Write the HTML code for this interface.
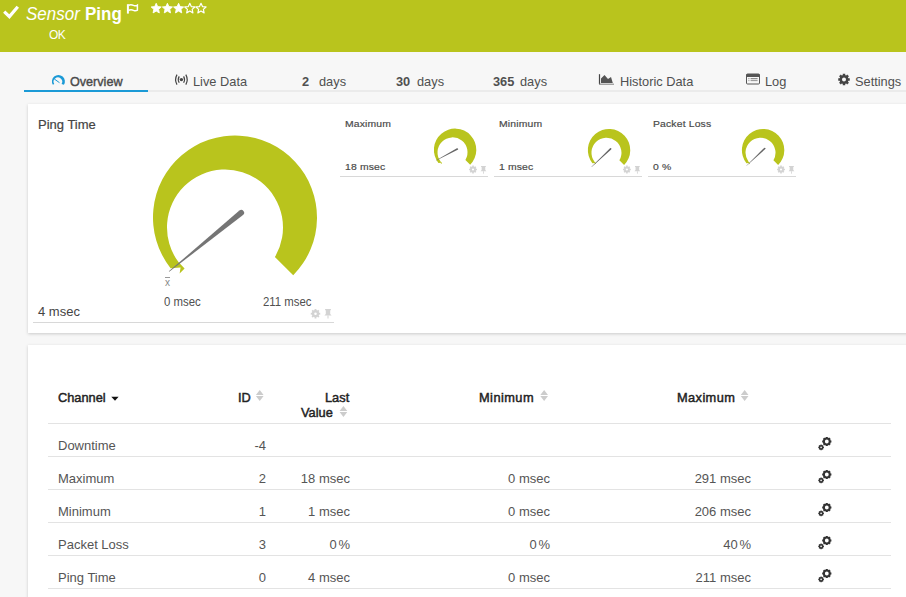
<!DOCTYPE html>
<html><head><meta charset="utf-8">
<style>
*{box-sizing:border-box;margin:0;padding:0}
html,body{width:906px;height:597px;overflow:hidden;background:#f7f7f7;font-family:"Liberation Sans",sans-serif;color:#444}
.abs{position:absolute;white-space:nowrap}
#hdr{position:absolute;left:0;top:0;width:906px;height:52px;background:#b9c41d}
.t{color:#fff}
.tabline{position:absolute;left:24px;top:90px;width:882px;height:2px;background:#ebebeb}
.tabul{position:absolute;left:24px;top:90px;width:124px;height:2px;background:#1b9ad6}
.tab{position:absolute;top:74px;font-size:12.8px;color:#505050;white-space:nowrap}
.panel{position:absolute;left:28px;background:#fff;box-shadow:0 1px 3px rgba(0,0,0,0.18)}
.th{position:absolute;font-size:12.8px;color:#222;-webkit-text-stroke:0.45px #222;white-space:nowrap}
.td{position:absolute;font-size:13px;color:#555;white-space:nowrap}
.rb{position:absolute;left:48px;width:843px;height:1px;background:#e3e3e3}
.sm{font-size:10.4px;color:#4a4a4a;-webkit-text-stroke:0.2px #4a4a4a;letter-spacing:0.15px;transform:scaleY(0.9);transform-origin:0 9px}
.ul{position:absolute;height:1px;background:#d8d8d8}
</style></head><body>
<div id="hdr"></div>
<svg class="abs" style="left:0;top:0" width="906" height="51" viewBox="0 0 906 51">
<path d="M4.2 11.6 L9.4 16.6 L17.8 6.8" fill="none" stroke="#fff" stroke-width="3.2"/>
<path d="M127.9 4.2 V13.6" stroke="#fff" stroke-width="2"/><path d="M128.5 5.2 Q131 4 133.5 5.4 Q135.8 6.4 137.4 5.2 V10.2 Q135.8 11.4 133.5 10.4 Q131 9 128.5 10.4" fill="none" stroke="#fff" stroke-width="1.5"/>
<path d="M156.20,3.30 L157.67,6.58 L161.24,6.96 L158.58,9.37 L159.32,12.89 L156.20,11.10 L153.08,12.89 L153.82,9.37 L151.16,6.96 L154.73,6.58Z" fill="#fff" stroke="#fff" stroke-width="0.9" stroke-linejoin="round"/><path d="M167.40,3.30 L168.87,6.58 L172.44,6.96 L169.78,9.37 L170.52,12.89 L167.40,11.10 L164.28,12.89 L165.02,9.37 L162.36,6.96 L165.93,6.58Z" fill="#fff" stroke="#fff" stroke-width="0.9" stroke-linejoin="round"/><path d="M178.60,3.30 L180.07,6.58 L183.64,6.96 L180.98,9.37 L181.72,12.89 L178.60,11.10 L175.48,12.89 L176.22,9.37 L173.56,6.96 L177.13,6.58Z" fill="#fff" stroke="#fff" stroke-width="0.9" stroke-linejoin="round"/><path d="M189.80,3.30 L191.27,6.58 L194.84,6.96 L192.18,9.37 L192.92,12.89 L189.80,11.10 L186.68,12.89 L187.42,9.37 L184.76,6.96 L188.33,6.58Z" fill="none" stroke="#fff" stroke-width="1.2" stroke-linejoin="round"/><path d="M201.00,3.30 L202.47,6.58 L206.04,6.96 L203.38,9.37 L204.12,12.89 L201.00,11.10 L197.88,12.89 L198.62,9.37 L195.96,6.96 L199.53,6.58Z" fill="none" stroke="#fff" stroke-width="1.2" stroke-linejoin="round"/>
</svg>
<div class="abs t" style="left:26px;top:5px;font-size:17px;font-style:italic;transform:scaleY(1.12);transform-origin:0 16px">Sensor</div>
<div class="abs t" style="left:85px;top:5px;font-size:17px;font-weight:700;transform:scaleY(1.12);transform-origin:0 16px">Ping</div>
<div class="abs t" style="left:49px;top:28px;font-size:12px;letter-spacing:-0.6px;transform:scaleY(1.1);transform-origin:0 11px">OK</div>

<div class="tabline"></div>
<div class="tabul"></div>
<svg class="abs" style="left:0;top:60px" width="906" height="30" viewBox="0 60 906 30">
<path d="M52.89,84.84 A6.5 6.5 0 1 1 63.91,84.84 L61.55,83.98 A4.3 4.3 0 1 0 54.25,83.98 Z" fill="#1b9ad6"/>
<path d="M54.3 79 L59.5 82.7" stroke="#1b9ad6" stroke-width="1"/>
<circle cx="181.4" cy="79.6" r="1.7" fill="#444"/>
<path d="M179.2 76.4 Q177.3 79.6 179.2 82.8 M183.6 76.4 Q185.5 79.6 183.6 82.8" fill="none" stroke="#444" stroke-width="1.2"/>
<path d="M177 74.6 Q174.2 79.6 177 84.6 M185.8 74.6 Q188.6 79.6 185.8 84.6" fill="none" stroke="#444" stroke-width="1.2"/>
<path d="M599.5 74.2 V84.2" fill="none" stroke="#444" stroke-width="1.2"/><path d="M599 84.2 H614" stroke="#888" stroke-width="1.1"/>
<path d="M601 83 V78.5 L604.5 75 L608 79 L611 77 L612.8 83 Z" fill="#555"/>
<rect x="746.5" y="74" width="13" height="10" rx="1" fill="none" stroke="#555" stroke-width="1"/>
<rect x="746.5" y="74" width="13" height="3" fill="#555"/>
<path d="M748.4 78.7 H749.4 M750.6 78.7 H757.6" stroke="#666" stroke-width="0.9"/><path d="M748.4 80.6 H749.4 M750.6 80.6 H757.6" stroke="#888" stroke-width="0.9"/>
<path fill-rule="evenodd" fill="#444" d="M842.80,75.16 L842.74,73.74 L845.26,73.74 L845.20,75.16 L845.72,75.34 L846.22,75.58 L847.18,74.53 L848.97,76.32 L847.92,77.28 L848.16,77.78 L848.34,78.30 L849.76,78.24 L849.76,80.76 L848.34,80.70 L848.16,81.22 L847.92,81.72 L848.97,82.68 L847.18,84.47 L846.22,83.42 L845.72,83.66 L845.20,83.84 L845.26,85.26 L842.74,85.26 L842.80,83.84 L842.28,83.66 L841.78,83.42 L840.82,84.47 L839.03,82.68 L840.08,81.72 L839.84,81.22 L839.66,80.70 L838.24,80.76 L838.24,78.24 L839.66,78.30 L839.84,77.78 L840.08,77.28 L839.03,76.32 L840.82,74.53 L841.78,75.58 L842.28,75.34Z M846.00,79.50 A2.00 2.00 0 1 0 842.00,79.50 A2.00 2.00 0 1 0 846.00,79.50Z"/>
</svg>
<div class="tab" style="left:70px;font-size:12.6px;top:75px;color:#4a4a4a;-webkit-text-stroke:0.4px #4a4a4a">Overview</div>
<div class="tab" style="left:193px">Live Data</div>
<div class="tab" style="left:302px"><b>2</b></div>
<div class="tab" style="left:319px">days</div>
<div class="tab" style="left:396px"><b>30</b></div>
<div class="tab" style="left:417px">days</div>
<div class="tab" style="left:493px"><b>365</b></div>
<div class="tab" style="left:520px">days</div>
<div class="tab" style="left:620px">Historic Data</div>
<div class="tab" style="left:765px">Log</div>
<div class="tab" style="left:855px">Settings</div>

<div class="panel" style="top:104px;width:890px;height:229px"></div>
<div class="panel" style="top:345px;width:890px;height:260px"></div>

<div class="abs" style="left:38px;top:117px;font-size:13px;color:#444;-webkit-text-stroke:0.2px #444">Ping Time</div>
<div class="abs" style="left:38px;top:304px;font-size:13px;color:#444">4 msec</div>
<div class="ul" style="left:33px;top:322px;width:301px"></div>

<svg class="abs" style="left:0;top:0" width="906" height="597" viewBox="0 0 906 597">
<path fill="#b9c41d" d="M170.57,268.23 A82.00 82.00 0 1 1 293.23,275.23 L274.90,257.06 A58.00 58.00 0 1 0 178.64,262.35 L184.60,268.60 L179.60,273.40 L180.60,267.60 Z"/>
<path fill="#757575" d="M169.19,271.83 L243.03,215.05 A2.9 2.9 0 0 0 239.37,210.55 L168.81,271.37 Z"/>
<path fill="#b9c41d" d="M438.44,162.91 A21.20 21.20 0 1 1 470.16,164.73 L465.42,160.03 A15.00 15.00 0 1 0 440.53,161.39 L442.07,163.01 L440.78,164.25 L441.04,162.75 Z"/>
<path fill="#b9c41d" d="M592.39,163.21 A21.20 21.20 0 1 1 624.11,165.03 L619.37,160.33 A15.00 15.00 0 1 0 594.48,161.69 L596.02,163.31 L594.73,164.55 L594.99,163.05 Z"/>
<path fill="#b9c41d" d="M746.44,163.21 A21.20 21.20 0 1 1 778.16,165.03 L773.42,160.33 A15.00 15.00 0 1 0 748.53,161.69 L750.07,163.31 L748.78,164.55 L749.04,163.05 Z"/>
<path fill="#666" d="M436.27,160.43 L457.70,149.85 A0.85 0.85 0 0 0 456.90,148.35 L436.13,160.17 Z"/>
<path fill="#666" d="M591.70,166.91 L611.18,149.52 A0.85 0.85 0 0 0 610.02,148.28 L591.50,166.69 Z"/>
<path fill="#666" d="M746.30,166.11 L765.28,149.12 A0.85 0.85 0 0 0 764.12,147.88 L746.10,165.89 Z"/>
<path fill-rule="evenodd" fill="#d3d3d3" d="M314.60,310.11 L314.56,308.99 L316.44,308.99 L316.40,310.11 L316.92,310.28 L317.40,310.53 L318.17,309.71 L319.49,311.03 L318.67,311.80 L318.92,312.28 L319.09,312.80 L320.21,312.76 L320.21,314.64 L319.09,314.60 L318.92,315.12 L318.67,315.60 L319.49,316.37 L318.17,317.69 L317.40,316.87 L316.92,317.12 L316.40,317.29 L316.44,318.41 L314.56,318.41 L314.60,317.29 L314.08,317.12 L313.60,316.87 L312.83,317.69 L311.51,316.37 L312.33,315.60 L312.08,315.12 L311.91,314.60 L310.79,314.64 L310.79,312.76 L311.91,312.80 L312.08,312.28 L312.33,311.80 L311.51,311.03 L312.83,309.71 L313.60,310.53 L314.08,310.28Z M316.80,313.70 A1.30 1.30 0 1 0 314.20,313.70 A1.30 1.30 0 1 0 316.80,313.70Z"/>
<path d="M325.10,309.00 L330.90,309.00 L330.90,310.20 L330.20,310.20 L330.20,314.00 L331.60,315.50 L324.40,315.50 L325.80,314.00 L325.80,310.20 L325.10,310.20 Z" fill="#d3d3d3"/><rect x="327.50" y="315.50" width="1.00" height="3.00" fill="#d3d3d3"/>
<path fill-rule="evenodd" fill="#d3d3d3" d="M472.25,166.49 L472.22,165.58 L473.78,165.58 L473.75,166.49 L474.19,166.64 L474.59,166.84 L475.22,166.17 L476.33,167.28 L475.66,167.91 L475.86,168.31 L476.01,168.75 L476.92,168.72 L476.92,170.28 L476.01,170.25 L475.86,170.69 L475.66,171.09 L476.33,171.72 L475.22,172.83 L474.59,172.16 L474.19,172.36 L473.75,172.51 L473.78,173.42 L472.22,173.42 L472.25,172.51 L471.81,172.36 L471.41,172.16 L470.78,172.83 L469.67,171.72 L470.34,171.09 L470.14,170.69 L469.99,170.25 L469.08,170.28 L469.08,168.72 L469.99,168.75 L470.14,168.31 L470.34,167.91 L469.67,167.28 L470.78,166.17 L471.41,166.84 L471.81,166.64Z M474.10,169.50 A1.10 1.10 0 1 0 471.90,169.50 A1.10 1.10 0 1 0 474.10,169.50Z"/><path d="M481.07,165.90 L485.83,165.90 L485.83,166.88 L485.26,166.88 L485.26,170.00 L486.40,171.23 L480.50,171.23 L481.65,170.00 L481.65,166.88 L481.07,166.88 Z" fill="#d3d3d3"/><rect x="483.04" y="171.23" width="0.82" height="2.46" fill="#d3d3d3"/><path fill-rule="evenodd" fill="#d3d3d3" d="M626.15,166.49 L626.12,165.58 L627.68,165.58 L627.65,166.49 L628.09,166.64 L628.49,166.84 L629.12,166.17 L630.23,167.28 L629.56,167.91 L629.76,168.31 L629.91,168.75 L630.82,168.72 L630.82,170.28 L629.91,170.25 L629.76,170.69 L629.56,171.09 L630.23,171.72 L629.12,172.83 L628.49,172.16 L628.09,172.36 L627.65,172.51 L627.68,173.42 L626.12,173.42 L626.15,172.51 L625.71,172.36 L625.31,172.16 L624.68,172.83 L623.57,171.72 L624.24,171.09 L624.04,170.69 L623.89,170.25 L622.98,170.28 L622.98,168.72 L623.89,168.75 L624.04,168.31 L624.24,167.91 L623.57,167.28 L624.68,166.17 L625.31,166.84 L625.71,166.64Z M628.00,169.50 A1.10 1.10 0 1 0 625.80,169.50 A1.10 1.10 0 1 0 628.00,169.50Z"/><path d="M634.97,165.90 L639.73,165.90 L639.73,166.88 L639.16,166.88 L639.16,170.00 L640.30,171.23 L634.40,171.23 L635.55,170.00 L635.55,166.88 L634.97,166.88 Z" fill="#d3d3d3"/><rect x="636.94" y="171.23" width="0.82" height="2.46" fill="#d3d3d3"/><path fill-rule="evenodd" fill="#d3d3d3" d="M780.25,166.49 L780.22,165.58 L781.78,165.58 L781.75,166.49 L782.19,166.64 L782.59,166.84 L783.22,166.17 L784.33,167.28 L783.66,167.91 L783.86,168.31 L784.01,168.75 L784.92,168.72 L784.92,170.28 L784.01,170.25 L783.86,170.69 L783.66,171.09 L784.33,171.72 L783.22,172.83 L782.59,172.16 L782.19,172.36 L781.75,172.51 L781.78,173.42 L780.22,173.42 L780.25,172.51 L779.81,172.36 L779.41,172.16 L778.78,172.83 L777.67,171.72 L778.34,171.09 L778.14,170.69 L777.99,170.25 L777.08,170.28 L777.08,168.72 L777.99,168.75 L778.14,168.31 L778.34,167.91 L777.67,167.28 L778.78,166.17 L779.41,166.84 L779.81,166.64Z M782.10,169.50 A1.10 1.10 0 1 0 779.90,169.50 A1.10 1.10 0 1 0 782.10,169.50Z"/><path d="M789.07,165.90 L793.83,165.90 L793.83,166.88 L793.26,166.88 L793.26,170.00 L794.40,171.23 L788.50,171.23 L789.65,170.00 L789.65,166.88 L789.07,166.88 Z" fill="#d3d3d3"/><rect x="791.04" y="171.23" width="0.82" height="2.46" fill="#d3d3d3"/>
<path d="M111.3 396.7 H118.6 L115 400.7 Z" fill="#111"/>
<path d="M255.9 394.9 L259.75 390 L263.6 394.9 Z M255.9 396 L259.75 400.9 L263.6 396 Z" fill="#ccc"/>
<path d="M540.3 394.9 L544.15 390 L548.0 394.9 Z M540.3 396 L544.15 400.9 L548.0 396 Z" fill="#ccc"/>
<path d="M740.8 394.9 L744.65 390 L748.5 394.9 Z M740.8 396 L744.65 400.9 L748.5 396 Z" fill="#ccc"/>
<path d="M339.6 410.9 L343.45000000000005 406 L347.3 410.9 Z M339.6 412 L343.45000000000005 416.9 L347.3 412 Z" fill="#ccc"/>
<path fill-rule="evenodd" fill="#333" d="M825.83,437.62 L825.88,436.89 L827.72,436.89 L827.77,437.62 L828.33,437.80 L828.86,438.07 L829.41,437.59 L830.71,438.89 L830.23,439.44 L830.50,439.97 L830.68,440.53 L831.41,440.58 L831.41,442.42 L830.68,442.47 L830.50,443.03 L830.23,443.56 L830.71,444.11 L829.41,445.41 L828.86,444.93 L828.33,445.20 L827.77,445.38 L827.72,446.11 L825.88,446.11 L825.83,445.38 L825.27,445.20 L824.74,444.93 L824.19,445.41 L822.89,444.11 L823.37,443.56 L823.10,443.03 L822.92,442.47 L822.19,442.42 L822.19,440.58 L822.92,440.53 L823.10,439.97 L823.37,439.44 L822.89,438.89 L824.19,437.59 L824.74,438.07 L825.27,437.80Z M828.70,441.50 A1.90 1.90 0 1 0 824.90,441.50 A1.90 1.90 0 1 0 828.70,441.50Z"/><path fill-rule="evenodd" fill="#333" d="M820.50,445.02 L820.53,444.56 L821.67,444.56 L821.70,445.02 L822.04,445.14 L822.36,445.30 L822.71,444.99 L823.51,445.79 L823.20,446.14 L823.36,446.46 L823.48,446.80 L823.94,446.83 L823.94,447.97 L823.48,448.00 L823.36,448.34 L823.20,448.66 L823.51,449.01 L822.71,449.81 L822.36,449.50 L822.04,449.66 L821.70,449.78 L821.67,450.24 L820.53,450.24 L820.50,449.78 L820.16,449.66 L819.84,449.50 L819.49,449.81 L818.69,449.01 L819.00,448.66 L818.84,448.34 L818.72,448.00 L818.26,447.97 L818.26,446.83 L818.72,446.80 L818.84,446.46 L819.00,446.14 L818.69,445.79 L819.49,444.99 L819.84,445.30 L820.16,445.14Z M821.90,447.40 A0.80 0.80 0 1 0 820.30,447.40 A0.80 0.80 0 1 0 821.90,447.40Z"/>
<path fill-rule="evenodd" fill="#333" d="M825.83,470.62 L825.88,469.89 L827.72,469.89 L827.77,470.62 L828.33,470.80 L828.86,471.07 L829.41,470.59 L830.71,471.89 L830.23,472.44 L830.50,472.97 L830.68,473.53 L831.41,473.58 L831.41,475.42 L830.68,475.47 L830.50,476.03 L830.23,476.56 L830.71,477.11 L829.41,478.41 L828.86,477.93 L828.33,478.20 L827.77,478.38 L827.72,479.11 L825.88,479.11 L825.83,478.38 L825.27,478.20 L824.74,477.93 L824.19,478.41 L822.89,477.11 L823.37,476.56 L823.10,476.03 L822.92,475.47 L822.19,475.42 L822.19,473.58 L822.92,473.53 L823.10,472.97 L823.37,472.44 L822.89,471.89 L824.19,470.59 L824.74,471.07 L825.27,470.80Z M828.70,474.50 A1.90 1.90 0 1 0 824.90,474.50 A1.90 1.90 0 1 0 828.70,474.50Z"/><path fill-rule="evenodd" fill="#333" d="M820.50,478.02 L820.53,477.56 L821.67,477.56 L821.70,478.02 L822.04,478.14 L822.36,478.30 L822.71,477.99 L823.51,478.79 L823.20,479.14 L823.36,479.46 L823.48,479.80 L823.94,479.83 L823.94,480.97 L823.48,481.00 L823.36,481.34 L823.20,481.66 L823.51,482.01 L822.71,482.81 L822.36,482.50 L822.04,482.66 L821.70,482.78 L821.67,483.24 L820.53,483.24 L820.50,482.78 L820.16,482.66 L819.84,482.50 L819.49,482.81 L818.69,482.01 L819.00,481.66 L818.84,481.34 L818.72,481.00 L818.26,480.97 L818.26,479.83 L818.72,479.80 L818.84,479.46 L819.00,479.14 L818.69,478.79 L819.49,477.99 L819.84,478.30 L820.16,478.14Z M821.90,480.40 A0.80 0.80 0 1 0 820.30,480.40 A0.80 0.80 0 1 0 821.90,480.40Z"/>
<path fill-rule="evenodd" fill="#333" d="M825.83,503.62 L825.88,502.89 L827.72,502.89 L827.77,503.62 L828.33,503.80 L828.86,504.07 L829.41,503.59 L830.71,504.89 L830.23,505.44 L830.50,505.97 L830.68,506.53 L831.41,506.58 L831.41,508.42 L830.68,508.47 L830.50,509.03 L830.23,509.56 L830.71,510.11 L829.41,511.41 L828.86,510.93 L828.33,511.20 L827.77,511.38 L827.72,512.11 L825.88,512.11 L825.83,511.38 L825.27,511.20 L824.74,510.93 L824.19,511.41 L822.89,510.11 L823.37,509.56 L823.10,509.03 L822.92,508.47 L822.19,508.42 L822.19,506.58 L822.92,506.53 L823.10,505.97 L823.37,505.44 L822.89,504.89 L824.19,503.59 L824.74,504.07 L825.27,503.80Z M828.70,507.50 A1.90 1.90 0 1 0 824.90,507.50 A1.90 1.90 0 1 0 828.70,507.50Z"/><path fill-rule="evenodd" fill="#333" d="M820.50,511.02 L820.53,510.56 L821.67,510.56 L821.70,511.02 L822.04,511.14 L822.36,511.30 L822.71,510.99 L823.51,511.79 L823.20,512.14 L823.36,512.46 L823.48,512.80 L823.94,512.83 L823.94,513.97 L823.48,514.00 L823.36,514.34 L823.20,514.66 L823.51,515.01 L822.71,515.81 L822.36,515.50 L822.04,515.66 L821.70,515.78 L821.67,516.24 L820.53,516.24 L820.50,515.78 L820.16,515.66 L819.84,515.50 L819.49,515.81 L818.69,515.01 L819.00,514.66 L818.84,514.34 L818.72,514.00 L818.26,513.97 L818.26,512.83 L818.72,512.80 L818.84,512.46 L819.00,512.14 L818.69,511.79 L819.49,510.99 L819.84,511.30 L820.16,511.14Z M821.90,513.40 A0.80 0.80 0 1 0 820.30,513.40 A0.80 0.80 0 1 0 821.90,513.40Z"/>
<path fill-rule="evenodd" fill="#333" d="M825.83,536.62 L825.88,535.89 L827.72,535.89 L827.77,536.62 L828.33,536.80 L828.86,537.07 L829.41,536.59 L830.71,537.89 L830.23,538.44 L830.50,538.97 L830.68,539.53 L831.41,539.58 L831.41,541.42 L830.68,541.47 L830.50,542.03 L830.23,542.56 L830.71,543.11 L829.41,544.41 L828.86,543.93 L828.33,544.20 L827.77,544.38 L827.72,545.11 L825.88,545.11 L825.83,544.38 L825.27,544.20 L824.74,543.93 L824.19,544.41 L822.89,543.11 L823.37,542.56 L823.10,542.03 L822.92,541.47 L822.19,541.42 L822.19,539.58 L822.92,539.53 L823.10,538.97 L823.37,538.44 L822.89,537.89 L824.19,536.59 L824.74,537.07 L825.27,536.80Z M828.70,540.50 A1.90 1.90 0 1 0 824.90,540.50 A1.90 1.90 0 1 0 828.70,540.50Z"/><path fill-rule="evenodd" fill="#333" d="M820.50,544.02 L820.53,543.56 L821.67,543.56 L821.70,544.02 L822.04,544.14 L822.36,544.30 L822.71,543.99 L823.51,544.79 L823.20,545.14 L823.36,545.46 L823.48,545.80 L823.94,545.83 L823.94,546.97 L823.48,547.00 L823.36,547.34 L823.20,547.66 L823.51,548.01 L822.71,548.81 L822.36,548.50 L822.04,548.66 L821.70,548.78 L821.67,549.24 L820.53,549.24 L820.50,548.78 L820.16,548.66 L819.84,548.50 L819.49,548.81 L818.69,548.01 L819.00,547.66 L818.84,547.34 L818.72,547.00 L818.26,546.97 L818.26,545.83 L818.72,545.80 L818.84,545.46 L819.00,545.14 L818.69,544.79 L819.49,543.99 L819.84,544.30 L820.16,544.14Z M821.90,546.40 A0.80 0.80 0 1 0 820.30,546.40 A0.80 0.80 0 1 0 821.90,546.40Z"/>
<path fill-rule="evenodd" fill="#333" d="M825.83,569.62 L825.88,568.89 L827.72,568.89 L827.77,569.62 L828.33,569.80 L828.86,570.07 L829.41,569.59 L830.71,570.89 L830.23,571.44 L830.50,571.97 L830.68,572.53 L831.41,572.58 L831.41,574.42 L830.68,574.47 L830.50,575.03 L830.23,575.56 L830.71,576.11 L829.41,577.41 L828.86,576.93 L828.33,577.20 L827.77,577.38 L827.72,578.11 L825.88,578.11 L825.83,577.38 L825.27,577.20 L824.74,576.93 L824.19,577.41 L822.89,576.11 L823.37,575.56 L823.10,575.03 L822.92,574.47 L822.19,574.42 L822.19,572.58 L822.92,572.53 L823.10,571.97 L823.37,571.44 L822.89,570.89 L824.19,569.59 L824.74,570.07 L825.27,569.80Z M828.70,573.50 A1.90 1.90 0 1 0 824.90,573.50 A1.90 1.90 0 1 0 828.70,573.50Z"/><path fill-rule="evenodd" fill="#333" d="M820.50,577.02 L820.53,576.56 L821.67,576.56 L821.70,577.02 L822.04,577.14 L822.36,577.30 L822.71,576.99 L823.51,577.79 L823.20,578.14 L823.36,578.46 L823.48,578.80 L823.94,578.83 L823.94,579.97 L823.48,580.00 L823.36,580.34 L823.20,580.66 L823.51,581.01 L822.71,581.81 L822.36,581.50 L822.04,581.66 L821.70,581.78 L821.67,582.24 L820.53,582.24 L820.50,581.78 L820.16,581.66 L819.84,581.50 L819.49,581.81 L818.69,581.01 L819.00,580.66 L818.84,580.34 L818.72,580.00 L818.26,579.97 L818.26,578.83 L818.72,578.80 L818.84,578.46 L819.00,578.14 L818.69,577.79 L819.49,576.99 L819.84,577.30 L820.16,577.14Z M821.90,579.40 A0.80 0.80 0 1 0 820.30,579.40 A0.80 0.80 0 1 0 821.90,579.40Z"/>
</svg>
<div class="abs" style="left:165px;top:276.5px;font-size:10px;color:#888">x</div><div class="abs" style="left:164.7px;top:277px;width:5px;height:1px;background:#999"></div>
<div class="abs" style="left:164px;top:296px;font-size:11.4px;color:#505050;transform:scaleY(1.08);transform-origin:0 11px">0 msec</div>
<div class="abs" style="left:263px;top:296px;font-size:11.4px;color:#505050;transform:scaleY(1.08);transform-origin:0 11px">211 msec</div>
<div class="abs sm" style="left:345px;top:118px">Maximum</div>
<div class="abs sm" style="left:345px;top:161px">18 msec</div>
<div class="ul" style="left:340px;top:176px;width:148px"></div>
<div class="abs sm" style="left:499px;top:118px">Minimum</div>
<div class="abs sm" style="left:499px;top:161px">1 msec</div>
<div class="ul" style="left:494px;top:176px;width:148px"></div>
<div class="abs sm" style="left:653px;top:118px">Packet Loss</div>
<div class="abs sm" style="left:653px;top:161px">0 %</div>
<div class="ul" style="left:648px;top:176px;width:148px"></div>

<div class="th" style="left:58px;top:389.5px">Channel</div>
<div class="th" style="left:238px;top:389.5px">ID</div>
<div class="th" style="left:325px;top:389.5px">Last</div>
<div class="th" style="left:301px;top:404.5px">Value</div>
<div class="th" style="left:479px;top:389.5px;letter-spacing:0.45px">Minimum</div>
<div class="th" style="left:677px;top:389.5px;letter-spacing:0.4px">Maximum</div>
<div class="rb" style="top:423px"></div>
<div class="td" style="left:58px;top:438px">Downtime</div><div class="td" style="right:640px;top:438px">-4</div><div class="rb" style="top:456px"></div>
<div class="td" style="left:58px;top:471px">Maximum</div><div class="td" style="right:640px;top:471px">2</div><div class="td" style="right:556px;top:471px">18 msec</div><div class="td" style="right:356px;top:471px">0 msec</div><div class="td" style="right:155px;top:471px">291 msec</div><div class="rb" style="top:489px"></div>
<div class="td" style="left:58px;top:504px">Minimum</div><div class="td" style="right:640px;top:504px">1</div><div class="td" style="right:556px;top:504px">1 msec</div><div class="td" style="right:356px;top:504px">0 msec</div><div class="td" style="right:155px;top:504px">206 msec</div><div class="rb" style="top:522px"></div>
<div class="td" style="left:58px;top:537px">Packet Loss</div><div class="td" style="right:640px;top:537px">3</div><div class="td" style="right:556px;top:537px;word-spacing:-2px">0 %</div><div class="td" style="right:356px;top:537px;word-spacing:-2px">0 %</div><div class="td" style="right:155px;top:537px;word-spacing:-2px">40 %</div><div class="rb" style="top:555px"></div>
<div class="td" style="left:58px;top:570px">Ping Time</div><div class="td" style="right:640px;top:570px">0</div><div class="td" style="right:556px;top:570px">4 msec</div><div class="td" style="right:356px;top:570px">0 msec</div><div class="td" style="right:155px;top:570px">211 msec</div><div class="rb" style="top:588px"></div>
</body></html>
